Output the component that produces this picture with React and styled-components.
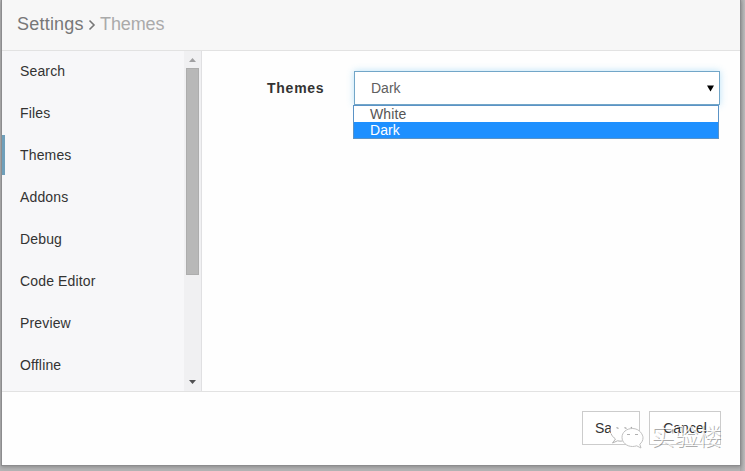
import React from "react";
import styled, { createGlobalStyle } from "styled-components";

const GlobalStyle = createGlobalStyle`
  * { box-sizing: border-box; }
  body {
    margin: 0;
    overflow: hidden;
    background: #b3b3b4;
    font-family: "Liberation Sans", Arial, sans-serif;
    font-size: 14px;
    color: #333;
  }
`;

const Backdrop = styled.div`
  position: relative;
  height: 471px;
  padding: 0 4px 5px 1px;
  background: linear-gradient(to right, #b5b5b6 740px, #a6a6a7 740px, #bcbcbd 745px);
`;

const Dialog = styled.section`
  display: flex;
  flex-direction: column;
  height: 466px;
  background: #fefefe;
  border: 1px solid #8c8c8e;
  border-top: 0;
  box-shadow: 0 1px 4px rgba(0, 0, 0, 0.25);
`;

const Header = styled.header`
  display: flex;
  align-items: center;
  height: 51px;
  padding: 0 0 1px 15px;
  background: #f7f7f7;
  border-bottom: 1px solid #e2e2e2;
  font-size: 18px;
  color: #777;
`;

const Title = styled.span`
  width: 67px;
  letter-spacing: 0.22px;
  white-space: nowrap;
`;

const Chevron = styled.svg`
  width: 8px;
  height: 12px;
  margin: 1px 0 0 4px;
`;

const Section = styled.span`
  margin-left: 4px;
  letter-spacing: -0.1px;
  color: #aaa;
`;

const Body = styled.div`
  display: flex;
  height: 340px;
`;

const Sidebar = styled.aside`
  display: flex;
  width: 200px;
  background: #f7f7f9;
  border-right: 1px solid #e0e0e2;
`;

const Menu = styled.nav`
  display: flex;
  flex: 1;
  flex-direction: column;
  gap: 2px;
  overflow: hidden;
`;

const MenuItem = styled.div`
  flex: none;
  height: 40px;
  padding-left: ${(p) => (p.$active ? 15 : 18)}px;
  border-left: ${(p) => (p.$active ? "3px solid #6f9fba" : "0")};
  line-height: 40px;
  letter-spacing: 0.15px;
`;

const Scrollbar = styled.div`
  display: flex;
  flex-direction: column;
  align-items: center;
  width: 17px;
  background: #f0f0f2;
`;

const ScrollArrow = styled.svg`
  width: 17px;
  height: 17px;
  flex: none;
`;

const Track = styled.div`
  flex: 1;
`;

const Thumb = styled.div`
  width: 13px;
  height: 207px;
  background: #b8b8b8;
  border: 1px solid #adadad;
`;

const Content = styled.main`
  display: flex;
  align-items: flex-start;
  flex: 1;
  padding: 20px 19px 0 65px;
`;

const Label = styled.label`
  width: 87px;
  line-height: 34px;
  font-weight: bold;
  letter-spacing: 0.75px;
`;

const SelectWrap = styled.div`
  position: relative;
  width: 366px;
`;

const SelectBox = styled.div`
  display: flex;
  align-items: center;
  justify-content: space-between;
  height: 34px;
  padding: 0 5px 0 16px;
  background: #fff;
  border: 1px solid #72a6c8;
  box-shadow: 0 0 7px rgba(102, 190, 240, 0.45);
  color: #606060;
`;

const Caret = styled.svg`
  width: 7px;
  height: 7px;
`;

const Options = styled.div`
  position: absolute;
  top: 34px;
  left: -1px;
  width: 366px;
  background: #fff;
  border: 1px solid #5b93c6;
`;

const Option = styled.div`
  height: 16px;
  padding-left: 16px;
  line-height: 17px;
  letter-spacing: 0.1px;
  color: ${(p) => (p.$selected ? "#fff" : "#555")};
  background: ${(p) => (p.$selected ? "#1e90ff" : "#fff")};
`;

const Footer = styled.footer`
  display: flex;
  justify-content: flex-end;
  gap: 9px;
  flex: 1;
  padding: 19px 19px 0 0;
  border-top: 1px solid #e2e2e2;
`;

const Button = styled.button`
  width: ${(p) => p.$width}px;
  height: 34px;
  padding: 0;
  background: #fff;
  border: 1px solid #ccc;
  font: inherit;
  color: #333;
`;

const Watermark = styled.div`
  position: absolute;
  left: 607px;
  top: 421px;
  display: flex;
  align-items: center;
  gap: 6px;
`;

const WatermarkLogo = styled.svg`
  width: 38px;
  height: 28px;
`;

const WatermarkText = styled.span`
  font-family: "Noto Sans CJK SC", sans-serif;
  font-size: 23.5px;
  font-weight: 300;
  line-height: 28px;
  color: rgba(255, 255, 255, 0.85);
  text-shadow: 1px 1px 0 rgba(90, 90, 90, 0.5);
`;

const sections = ["Search", "Files", "Themes", "Addons", "Debug", "Code Editor", "Preview", "Offline"];
const themes = ["White", "Dark"];

export default function App() {
  return (
    <Backdrop>
      <GlobalStyle />
      <Dialog>
        <Header>
          <Title>Settings</Title>
          <Chevron viewBox="0 0 8 12">
            <path d="M1.5 1.500 6 6l-4.500 4.500" fill="none" stroke="#777" strokeWidth="1.600" />
          </Chevron>
          <Section>Themes</Section>
        </Header>
        <Body>
          <Sidebar>
            <Menu>
              {sections.map((name) => (
                <MenuItem key={name} $active={name === "Themes"}>{name}</MenuItem>
              ))}
            </Menu>
            <Scrollbar>
              <ScrollArrow viewBox="0 0 17 17">
                <path d="M5 11h7L8.500 7z" fill="#a0a0a2" />
              </ScrollArrow>
              <Track><Thumb /></Track>
              <ScrollArrow viewBox="0 0 17 17">
                <path d="M5 6h7L8.500 10z" fill="#505052" />
              </ScrollArrow>
            </Scrollbar>
          </Sidebar>
          <Content>
            <Label>Themes</Label>
            <SelectWrap>
              <SelectBox>
                <span>Dark</span>
                <Caret viewBox="0 0 7 7"><path d="M0 .5h7l-3.500 6z" fill="#000" /></Caret>
              </SelectBox>
              <Options>
                {themes.map((name) => (
                  <Option key={name} $selected={name === "Dark"}>{name}</Option>
                ))}
              </Options>
            </SelectWrap>
          </Content>
        </Body>
        <Footer>
          <Button $width={58}>Save</Button>
          <Button $width={72}>Cancel</Button>
        </Footer>
      </Dialog>
      <Watermark>
        <WatermarkLogo viewBox="0 0 38 28">
          <path d="M14 0C7 0 3.500 4 3.500 9c0 4 1.500 6.500 5 8.500L5.500 22l6-2.500c3 .8 4.500 .6 6.500-.3l8-9C25 3 20 0 14 0z" fill="#fff" />
          <path d="M4 12.500c1 2.500 2.500 4 4.500 5.500L5.500 22l5-2.200c2 .4 3 .5 5 .2" fill="none" stroke="#b5b5b5" />
          <path d="M9.500 6.500l2 1M17.500 6.500l2 1M24 6l2 3" stroke="#a5a5a5" strokeWidth="1.300" />
          <path d="M25.500 7.500c-6 0-10.500 3.800-10.500 8.800s4.500 9.200 10.500 9.200c1.500 0 3-.3 4.200-.7l4.300 2.200-1.200-3.800c2-1.500 3.200-3.900 3.200-6.500" fill="#fff" />
          <path d="M25.500 7.500c-6 0-10.500 3.800-10.500 8.800s4.500 9.200 10.500 9.200c1.500 0 3-.3 4.200-.7l4.300 2.200-1.200-3.800c2-1.500 3.200-3.900 3.200-6.500s-3-9.200-10.500-9.200z" fill="#fff" stroke="#c0c0c0" />
          <path d="M20 13.500h3M28 13.500h3" stroke="#b0b0b0" strokeWidth="1.200" />
        </WatermarkLogo>
        <WatermarkText>实验楼</WatermarkText>
      </Watermark>
    </Backdrop>
  );
}
